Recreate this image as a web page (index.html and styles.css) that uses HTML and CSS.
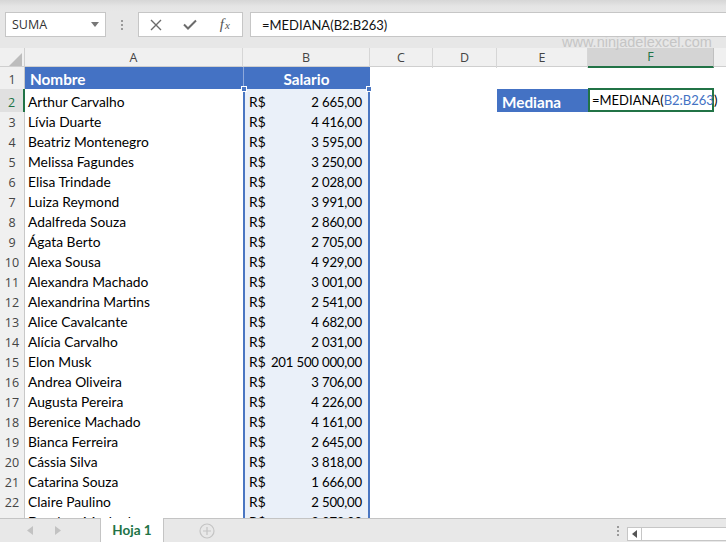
FILE: index.html
```html
<!DOCTYPE html>
<html lang="es">
<head>
<meta charset="utf-8">
<title>Mediana</title>
<link rel="stylesheet" href="styles.css">
</head>
<body>
<div class="app">
  <div class="topbar">
    <div class="namebox"><span>SUMA</span><svg class="caret" width="8" height="5" viewBox="0 0 8 5"><path d="M0 0h8L4 5z" fill="#777"/></svg></div>
    <div class="grip"><i></i><i></i><i></i></div>
    <div class="fnbtns">
      <span class="btn"><svg width="12" height="12" viewBox="0 0 12 12"><path d="M1 1l10 10M11 1L1 11" stroke="#6b6b6b" stroke-width="1.4" fill="none"/></svg></span>
      <span class="btn"><svg width="14" height="11" viewBox="0 0 14 11"><path d="M1 5.5l4 4L13 1.5" stroke="#6b6b6b" stroke-width="2" fill="none"/></svg></span>
      <span class="btn fx"><i>f</i><i class="sub">x</i></span>
    </div>
    <div class="formula">=MEDIANA(B2:B263)</div>
  </div>
  <div class="watermark">www.ninjadelexcel.com</div>
  <div class="sheet">
    <div class="row colhdr">
      <div class="corner"><svg width="13" height="13" viewBox="0 0 13 13"><path d="M13 0v13H0z" fill="#bcbcbc"/></svg></div>
      <div class="ch">A</div><div class="ch">B</div><div class="ch">C</div><div class="ch">D</div><div class="ch">E</div><div class="ch active">F</div><div class="ch last"></div>
    </div>
    <div class="row r1">
      <div class="rh">1</div>
      <div class="c hdr">Nombre</div>
      <div class="c hdr center sal">Salario</div>
      <div class="c"></div><div class="c"></div><div class="c"></div><div class="c"></div><div class="c"></div>
    </div>
    <div class="row r2">
      <div class="rh sel">2</div>
      <div class="c">Arthur Carvalho</div>
      <div class="c b top"><span>R$</span><span class="n">2 665,00</span><i class="handle hl"></i><i class="handle hr"></i></div>
      <div class="c"></div><div class="c"></div>
      <div class="c label">Mediana</div>
      <div class="c edit">=MEDIANA(<span class="ref">B2:B263</span>)<span class="cursor"></span></div>
      <div class="c"></div>
    </div>
    <div class="row"><div class="rh">3</div><div class="c">Lívia Duarte</div><div class="c b"><span>R$</span><span class="n">4 416,00</span></div><div class="c"></div><div class="c"></div><div class="c"></div><div class="c"></div><div class="c"></div></div>
    <div class="row"><div class="rh">4</div><div class="c">Beatriz Montenegro</div><div class="c b"><span>R$</span><span class="n">3 595,00</span></div><div class="c"></div><div class="c"></div><div class="c"></div><div class="c"></div><div class="c"></div></div>
    <div class="row"><div class="rh">5</div><div class="c">Melissa Fagundes</div><div class="c b"><span>R$</span><span class="n">3 250,00</span></div><div class="c"></div><div class="c"></div><div class="c"></div><div class="c"></div><div class="c"></div></div>
    <div class="row"><div class="rh">6</div><div class="c">Elisa Trindade</div><div class="c b"><span>R$</span><span class="n">2 028,00</span></div><div class="c"></div><div class="c"></div><div class="c"></div><div class="c"></div><div class="c"></div></div>
    <div class="row"><div class="rh">7</div><div class="c">Luiza Reymond</div><div class="c b"><span>R$</span><span class="n">3 991,00</span></div><div class="c"></div><div class="c"></div><div class="c"></div><div class="c"></div><div class="c"></div></div>
    <div class="row"><div class="rh">8</div><div class="c">Adalfreda Souza</div><div class="c b"><span>R$</span><span class="n">2 860,00</span></div><div class="c"></div><div class="c"></div><div class="c"></div><div class="c"></div><div class="c"></div></div>
    <div class="row"><div class="rh">9</div><div class="c">Ágata Berto</div><div class="c b"><span>R$</span><span class="n">2 705,00</span></div><div class="c"></div><div class="c"></div><div class="c"></div><div class="c"></div><div class="c"></div></div>
    <div class="row"><div class="rh">10</div><div class="c">Alexa Sousa</div><div class="c b"><span>R$</span><span class="n">4 929,00</span></div><div class="c"></div><div class="c"></div><div class="c"></div><div class="c"></div><div class="c"></div></div>
    <div class="row"><div class="rh">11</div><div class="c">Alexandra Machado</div><div class="c b"><span>R$</span><span class="n">3 001,00</span></div><div class="c"></div><div class="c"></div><div class="c"></div><div class="c"></div><div class="c"></div></div>
    <div class="row"><div class="rh">12</div><div class="c">Alexandrina Martins</div><div class="c b"><span>R$</span><span class="n">2 541,00</span></div><div class="c"></div><div class="c"></div><div class="c"></div><div class="c"></div><div class="c"></div></div>
    <div class="row"><div class="rh">13</div><div class="c">Alice Cavalcante</div><div class="c b"><span>R$</span><span class="n">4 682,00</span></div><div class="c"></div><div class="c"></div><div class="c"></div><div class="c"></div><div class="c"></div></div>
    <div class="row"><div class="rh">14</div><div class="c">Alícia Carvalho</div><div class="c b"><span>R$</span><span class="n">2 031,00</span></div><div class="c"></div><div class="c"></div><div class="c"></div><div class="c"></div><div class="c"></div></div>
    <div class="row"><div class="rh">15</div><div class="c">Elon Musk</div><div class="c b"><span>R$</span><span class="n">201 500 000,00</span></div><div class="c"></div><div class="c"></div><div class="c"></div><div class="c"></div><div class="c"></div></div>
    <div class="row"><div class="rh">16</div><div class="c">Andrea Oliveira</div><div class="c b"><span>R$</span><span class="n">3 706,00</span></div><div class="c"></div><div class="c"></div><div class="c"></div><div class="c"></div><div class="c"></div></div>
    <div class="row"><div class="rh">17</div><div class="c">Augusta Pereira</div><div class="c b"><span>R$</span><span class="n">4 226,00</span></div><div class="c"></div><div class="c"></div><div class="c"></div><div class="c"></div><div class="c"></div></div>
    <div class="row"><div class="rh">18</div><div class="c">Berenice Machado</div><div class="c b"><span>R$</span><span class="n">4 161,00</span></div><div class="c"></div><div class="c"></div><div class="c"></div><div class="c"></div><div class="c"></div></div>
    <div class="row"><div class="rh">19</div><div class="c">Bianca Ferreira</div><div class="c b"><span>R$</span><span class="n">2 645,00</span></div><div class="c"></div><div class="c"></div><div class="c"></div><div class="c"></div><div class="c"></div></div>
    <div class="row"><div class="rh">20</div><div class="c">Cássia Silva</div><div class="c b"><span>R$</span><span class="n">3 818,00</span></div><div class="c"></div><div class="c"></div><div class="c"></div><div class="c"></div><div class="c"></div></div>
    <div class="row"><div class="rh">21</div><div class="c">Catarina Souza</div><div class="c b"><span>R$</span><span class="n">1 666,00</span></div><div class="c"></div><div class="c"></div><div class="c"></div><div class="c"></div><div class="c"></div></div>
    <div class="row"><div class="rh">22</div><div class="c">Claire Paulino</div><div class="c b"><span>R$</span><span class="n">2 500,00</span></div><div class="c"></div><div class="c"></div><div class="c"></div><div class="c"></div><div class="c"></div></div>
    <div class="row"><div class="rh">23</div><div class="c">Dandara Machado</div><div class="c b"><span>R$</span><span class="n">2 073,00</span></div><div class="c"></div><div class="c"></div><div class="c"></div><div class="c"></div><div class="c"></div></div>
  </div>
  <div class="tabbar">
    <div class="nav">
      <svg width="6" height="9" viewBox="0 0 6 9"><path d="M6 0v9L0 4.5z" fill="#c2c2c2"/></svg>
      <svg width="6" height="9" viewBox="0 0 6 9"><path d="M0 0v9l6-4.5z" fill="#c2c2c2"/></svg>
    </div>
    <div class="tab">Hoja 1</div>
    <div class="addsheet"><svg width="16" height="16" viewBox="0 0 16 16"><circle cx="8" cy="8" r="7" fill="none" stroke="#c4c4c4" stroke-width="1.2"/><path d="M8 4v8M4 8h8" stroke="#c4c4c4" stroke-width="1.2"/></svg></div>
    <div class="spacer"></div>
    <div class="grip2"><i></i><i></i><i></i></div>
    <div class="hscroll"><span class="larrow"><svg width="5" height="8" viewBox="0 0 5 8"><path d="M5 0v8L0 4z" fill="#555"/></svg></span></div>
  </div>
</div>
</body>
</html>
```

FILE: styles.css
```css
* { box-sizing: border-box; }
html, body { margin: 0; padding: 0; }
body {
  width: 726px;
  height: 542px;
  overflow: hidden;
  background: #fff;
  font-family: Lato, "Liberation Sans", sans-serif;
}
.app {
  position: relative;
  width: 726px;
  height: 542px;
  display: flex;
  flex-direction: column;
  overflow: hidden;
}

/* ---------- top / formula bar ---------- */
.topbar {
  height: 48px;
  flex: none;
  display: flex;
  align-items: flex-start;
  padding: 12px 0 0 5px;
  background: linear-gradient(#d6d6d6 0, #e4e4e4 6px, #e7e7e7 12px, #e7e7e7 100%);
}
.namebox {
  width: 101px;
  height: 25px;
  background: #fff;
  border: 1px solid #c6c6c6;
  display: flex;
  align-items: center;
  justify-content: space-between;
  padding: 0 6px 0 6px;
  font-family: "Open Sans", "Liberation Sans", sans-serif;
  font-size: 12.5px;
  color: #333;
}
.grip {
  width: 32px;
  height: 25px;
  display: flex;
  flex-direction: column;
  align-items: center;
  justify-content: center;
  gap: 2px;
}
.grip i, .grip2 i {
  display: block;
  width: 2px;
  height: 2px;
  background: #9a9a9a;
}
.fnbtns {
  width: 105px;
  height: 25px;
  background: #fff;
  border: 1px solid #c6c6c6;
  display: flex;
  align-items: center;
}
.btn {
  width: 36px;
  display: flex;
  align-items: center;
  justify-content: center;
}
.fx {
  font-family: "Liberation Serif", serif;
  font-size: 15px;
  color: #555;
}
.fx .sub { font-size: 11px; margin-left: 1px; }
.formula {
  flex: 1;
  height: 25px;
  margin-left: 7px;
  margin-right: -4px;
  background: #fff;
  border: 1px solid #c6c6c6;
  padding-left: 11px;
  display: flex;
  align-items: center;
  font-size: 13px;
  color: #111;
}
.watermark {
  position: absolute;
  left: 562px;
  top: 34px;
  font-family: "Liberation Sans", sans-serif;
  font-size: 14.5px;
  color: #c5c5c5;
  z-index: 2;
}

/* ---------- sheet ---------- */
.sheet {
  flex: 1;
  overflow: hidden;
}
.row {
  display: grid;
  grid-template-columns: 25px 218px 127px 63px 64px 91px 126px 1fr;
  height: 20px;
}
.colhdr {
  height: 19px;
  background: #f0f0f0;
  border-bottom: 1px solid #cfcfcf;
  font-family: "Open Sans", "Liberation Sans", sans-serif;
  font-size: 12.5px;
  color: #444;
}
.corner {
  border-right: 1px solid #cfcfcf;
  display: flex;
  align-items: flex-end;
  justify-content: flex-end;
  padding: 0 2px 2px 0;
}
.ch {
  border-right: 1px solid #d6d6d6;
  display: flex;
  align-items: center;
  justify-content: center;
  line-height: 18px;
}
.ch.last { border-right: none; }
.ch.active {
  background: #d4d4d4;
  color: #217346;
  border-bottom: 2px solid #217346;
  border-right-color: #c0c0c0;
}
.r1 { height: 22px; }
.r2 { height: 23px; }
.rh {
  background: #f0f0f0;
  border-right: 1px solid #c8c8c8;
  display: flex;
  align-items: flex-end;
  justify-content: center;
  font-family: "Open Sans", "Liberation Sans", sans-serif;
  font-size: 12.5px;
  line-height: 19px;
  color: #444;
}
.rh.sel {
  background: #e0e0e0;
  color: #217346;
  border-right: 2px solid #217346;
}
.c {
  position: relative;
  display: flex;
  align-items: flex-end;
  padding: 0 4px 0 3px;
  font-size: 13.8px;
  line-height: 20px;
  color: #000;
  white-space: nowrap;
}
.hdr {
  background: #4472c4;
  color: #fff;
  font-weight: 700;
  font-size: 15.3px;
  padding-left: 5px;
}
.center { justify-content: center; }
.sal { border-left: 1px solid #8ea9db; padding-left: 3px; }
.b {
  background: #eaf0f9;
  border-left: 2px solid #4a76c2;
  border-right: 2px solid #4a76c2;
  justify-content: space-between;
  padding: 0 6px 0 4px;
}
.n { font-size: 13.2px; letter-spacing: -0.2px; }
.handle {
  position: absolute;
  top: -3px;
  width: 6px;
  height: 6px;
  background: #4a76c2;
  border: 1px solid #fff;
}
.hl { left: -4px; }
.hr { right: -4px; }
.label {
  background: #4472c4;
  color: #fff;
  font-weight: 700;
  font-size: 15.3px;
  padding-left: 5px;
}
.edit {
  border: 2px solid #217346;
  margin-top: -1px;
  padding-left: 2px;
  font-size: 13px;
  line-height: 19px;
}
.ref { color: #4472c4; }
.cursor {
  display: inline-block;
  width: 1px;
  height: 18px;
  background: #000;
  margin-left: 1px;
  margin-bottom: -1px;
}

/* ---------- sheet tabs ---------- */
.tabbar {
  height: 24px;
  flex: none;
  background: #e8e8e8;
  border-top: 1px solid #c4c4c4;
  display: flex;
  align-items: stretch;
}
.nav {
  width: 100px;
  display: flex;
  align-items: center;
  padding-left: 27px;
  gap: 22px;
}
.tab {
  width: 64px;
  margin-top: -1px;
  background: #fff;
  border-left: 1px solid #c4c4c4;
  border-right: 1px solid #c4c4c4;
  display: flex;
  align-items: center;
  justify-content: center;
  color: #217346;
  font-weight: 700;
  font-size: 13.5px;
}
.addsheet {
  width: 84px;
  display: flex;
  align-items: center;
  justify-content: center;
  padding-left: 1px;
}
.spacer { flex: 1; }
.grip2 {
  width: 18px;
  display: flex;
  flex-direction: column;
  align-items: center;
  justify-content: center;
  gap: 2px;
}
.hscroll {
  width: 99px;
  margin: 8px 0 1px 0;
  background: #fff;
  border: 1px solid #c6c6c6;
  border-right: none;
  display: flex;
}
.larrow {
  width: 14px;
  display: flex;
  align-items: center;
  justify-content: center;
  border-right: 1px solid #c6c6c6;
}
```
